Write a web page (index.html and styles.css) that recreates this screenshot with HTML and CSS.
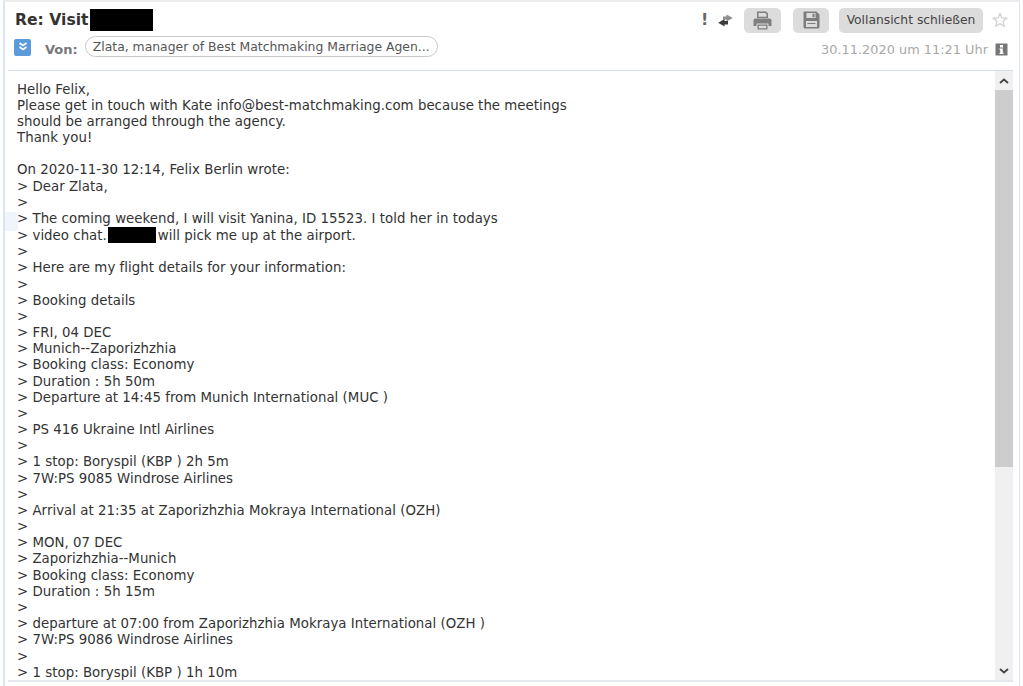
FILE: index.html
```html
<!DOCTYPE html>
<html lang="de">
<head>
<meta charset="utf-8">
<title>Re: Visit</title>
<link rel="stylesheet" href="styles.css">
</head>
<body>
<div class="tint"></div>
<div class="frame">
  <header class="head">
    <div class="row-one">
      <h1 class="subject">Re: Visit<span class="redact-title"></span></h1>
      <div class="actions">
        <span class="prio">!</span>
        <svg class="swap" width="15" height="13" viewBox="0 0 15 13"><path d="M8.500 0.500 L14.800 4 L8.500 7.500 V5.500 H5 V2.500 H8.500 Z" fill="#8e8e8e"/><path d="M6.500 5 L0.200 8.700 L6.500 12.500 V10.500 H10 V7 H6.500 Z" fill="#3c3c3c"/></svg>
        <button class="icon-btn print-btn" aria-label="Drucken">
          <svg width="19" height="19" viewBox="0 0 19 19"><path d="M4 0.500 H13 L15 2.500 V7 H4 Z M5.500 2 V5.800 H13.500 V3.200 L12.300 2 Z" fill="#7e7e7e" fill-rule="evenodd"/><path d="M2.500 7.500 H16.500 Q18.500 7.500 18.500 9.500 V15 H15.500 V12.500 H3.500 V15 H0.500 V9.500 Q0.500 7.500 2.500 7.500 Z" fill="#7e7e7e"/><path d="M4.500 13.500 H14.500 V18.500 H4.500 Z M5.800 14.800 V17.200 H13.200 V14.800 Z" fill="#7e7e7e" fill-rule="evenodd"/></svg>
        </button>
        <button class="icon-btn save-btn" aria-label="Speichern">
          <svg width="17" height="18" viewBox="0 0 17 18"><path d="M1.500 0.500 H13.500 L16.500 3.500 V16 Q16.500 17.500 15 17.500 H2 Q0.500 17.500 0.500 16 V1.500 Q0.500 0.500 1.500 0.500 Z M3.500 2 V7 H12.500 V2 Z M9.500 2.800 H11.500 V6.200 H9.500 Z M3 10 V16 H14 V10 Z" fill="#7e7e7e" fill-rule="evenodd"/><path d="M4.500 12 H12.500 V13 H4.500 Z" fill="#7e7e7e"/></svg>
        </button>
        <button class="text-btn">Vollansicht schließen</button>
        <svg class="star" width="16" height="16" viewBox="0 0 16 16"><path d="M8 1.500 L9.900 5.900 L14.700 6.300 L11.100 9.500 L12.200 14.200 L8 11.700 L3.800 14.200 L4.900 9.500 L1.300 6.300 L6.100 5.900 Z" fill="none" stroke="#cfcfcf" stroke-width="1.200"/></svg>
      </div>
    </div>
    <div class="row-two">
      <span class="expand"><svg width="12" height="12" viewBox="0 0 12 12"><path d="M2.500 2 L6 4.500 L9.500 2 M2.500 6 L6 8.500 L9.500 6" fill="none" stroke="#fff" stroke-width="1.600"/></svg></span>
      <span class="from-label">Von:</span>
      <span class="from-pill">Zlata, manager of Best Matchmaking Marriage Agen...</span>
      <span class="date">30.11.2020 um 11:21 Uhr</span>
      <svg class="info" width="13" height="13" viewBox="0 0 13 13"><path d="M1 0.500 H12 Q12.500 0.500 12.500 1 V12 Q12.500 12.500 12 12.500 H1 Q0.500 12.500 0.500 12 V1 Q0.500 0.500 1 0.500 Z M5 2 V4.500 H8 V2 Z M4.500 5.500 V6.800 H5.200 V9.800 H4.500 V11 H8.500 V9.800 H7.800 V5.500 Z" fill="#777" fill-rule="evenodd"/></svg>
    </div>
  </header>
  <main class="mail">
    <pre class="body-text">Hello Felix,
Please get in touch with Kate info@best-matchmaking.com because the meetings
should be arranged through the agency.
Thank you!

On 2020-11-30 12:14, Felix Berlin wrote:
&gt; Dear Zlata,
&gt;
&gt; The coming weekend, I will visit Yanina, ID 15523. I told her in todays
&gt; video chat.<span class="redact-inline"></span>will pick me up at the airport.
&gt;
&gt; Here are my flight details for your information:
&gt;
&gt; Booking details
&gt;
&gt; FRI, 04 DEC
&gt; Munich--Zaporizhzhia
&gt; Booking class: Economy
&gt; Duration : 5h 50m
&gt; Departure at 14:45 from Munich International (MUC )
&gt;
&gt; PS 416 Ukraine Intl Airlines
&gt;
&gt; 1 stop: Boryspil (KBP ) 2h 5m
&gt; 7W:PS 9085 Windrose Airlines
&gt;
&gt; Arrival at 21:35 at Zaporizhzhia Mokraya International (OZH)
&gt;
&gt; MON, 07 DEC
&gt; Zaporizhzhia--Munich
&gt; Booking class: Economy
&gt; Duration : 5h 15m
&gt;
&gt; departure at 07:00 from Zaporizhzhia Mokraya International (OZH )
&gt; 7W:PS 9086 Windrose Airlines
&gt;
&gt; 1 stop: Boryspil (KBP ) 1h 10m</pre>
    <div class="scrollbar">
      <svg class="arrow arrow-up" width="10" height="6" viewBox="0 0 10 6"><path d="M1 5 L5 1.500 L9 5" fill="none" stroke="#444" stroke-width="1.800"/></svg>
      <div class="track"><div class="thumb"></div></div>
      <svg class="arrow" width="10" height="6" viewBox="0 0 10 6"><path d="M1 1 L5 4.500 L9 1" fill="none" stroke="#444" stroke-width="1.800"/></svg>
    </div>
  </main>
</div>
</body>
</html>
```
FILE: styles.css
```css
* { box-sizing: border-box; }
html, body { margin: 0; height: 100%; overflow: hidden; background: #fff; }
body { position: relative; padding: 0 3px 0 3px; font-family: "DejaVu Sans", sans-serif; }
.tint { position: absolute; left: 5px; top: 212px; width: 13px; height: 19px; background: #f0f5fb; }
.frame {
  position: relative;
  height: 686px;
  display: flex;
  flex-direction: column;
  border-top: 2px solid #ededed;
  border-left: 2px solid #dbe5f1;
  border-right: 1px solid #dbe5f1;
  padding: 0 6px 0 3px;
}
.head { flex: none; height: 69px; border-bottom: 1px solid #d5dde8; }
.row-one { display: flex; align-items: center; height: 33px; padding: 3px 5px 0 7px; }
.subject { margin: 0; font-size: 15.600px; font-weight: 700; color: #333; display: flex; align-items: center; gap: 2px; white-space: pre; line-height: 22px; }
.redact-title { display: inline-block; width: 63px; height: 22px; background: #000; }
.actions { margin-left: auto; display: flex; align-items: center; }
.prio { font-weight: 700; font-size: 16px; line-height: 16px; color: #666; width: 7px; }
.swap { margin-left: 10px; }
.icon-btn, .text-btn { border: 0; border-radius: 5px; background: #dcdcdc; height: 25px; padding: 0; display: flex; align-items: center; justify-content: center; }
.print-btn { width: 37px; margin-left: 11px; }
.save-btn { width: 36px; margin-left: 12px; }
.text-btn { width: 144px; margin-left: 10px; font: 12.300px "DejaVu Sans", sans-serif; color: #444; }
.star { margin-left: 9px; }
.row-two { display: flex; align-items: center; height: 26px; padding: 2px 5px 4px 6px; }
.expand { width: 17px; height: 17px; border-radius: 2px; background: #5b9bdc; display: flex; align-items: center; justify-content: center; }
.from-label { margin: 4px 0 0 14px; font-size: 13px; font-weight: 700; color: #777; }
.from-pill { margin: -2px 0 0 7px; height: 21px; width: 353px; border: 1px solid #c9c9c9; border-radius: 11px; padding: 0 7px; font-size: 12.400px; line-height: 20px; color: #555; white-space: nowrap; }
.date { margin: 4px 0 0 auto; font-size: 12.900px; color: #a8a8a8; }
.info { margin: 4px 0 0 7px; }
.mail { flex: 1; min-height: 0; display: flex; margin-bottom: 4px; border-bottom: 2px solid #e4e8ee; }
.body-text { flex: 1; margin: 0; padding: 10.500px 0 0 9px; overflow: hidden; font: 13.330px/16.170px "DejaVu Sans", sans-serif; letter-spacing: 0.030px; color: #333; }
.redact-inline { display: inline-block; width: 48px; height: 16px; margin: 0 2px 0 1px; background: #000; vertical-align: -3px; }
.scrollbar { flex: none; width: 18px; display: flex; flex-direction: column; align-items: center; background: #f0f0f0; }
.arrow { flex: none; margin: 6px 0; }
.arrow-up { margin-top: 7px; }
.track { flex: 1; width: 100%; min-height: 0; }
.thumb { height: 377px; background: #cdcdcd; }
```
